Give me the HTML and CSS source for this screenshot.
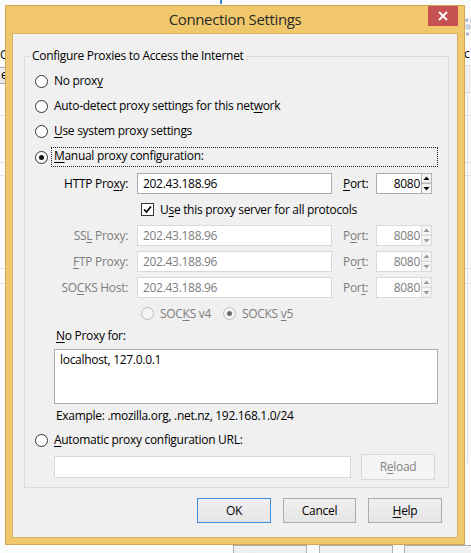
FILE: index.html
```html
<!DOCTYPE html>
<html lang="en">
<head>
    <meta charset="UTF-8">
    <title>Connection Settings</title>
    <link rel="stylesheet" href="styles.css">
</head>
<body>
    <!-- Options window that sits behind the dialog -->
    <div class="parent-window">
        <span class="parent-tick"></span>
        <span class="parent-text parent-g">G</span>
        <span class="parent-text parent-c">c</span>
        <span class="parent-btn parent-btn-left">er</span>
        <span class="parent-band"></span>
        <svg class="parent-gear" width="14" height="20" viewBox="0 0 14 20">
            <circle cx="10" cy="10" r="7" fill="none" stroke="#a9b8c8" stroke-width="3" stroke-dasharray="3 2"/>
            <circle cx="10" cy="10" r="3" fill="#c9d3de"/>
        </svg>
        <span class="parent-rule" style="top: 115px"></span>
        <span class="parent-rule" style="top: 162px"></span>
        <span class="parent-rule" style="top: 175px"></span>
        <span class="parent-rule" style="top: 268px"></span>
        <span class="parent-rule" style="top: 283px"></span>
        <span class="parent-vline"></span>
        <span class="parent-btn parent-btn-bottom" style="left: 233px"></span>
        <span class="parent-btn parent-btn-bottom" style="left: 319px"></span>
        <span class="parent-btn parent-btn-bottom" style="left: 404px"></span>
    </div>

    <div class="dialog">
        <div class="titlebar">
            <span class="title">Connection Settings</span>
            <button class="close-btn">
                <svg width="10" height="10" viewBox="0 0 10 10">
                    <path d="M1 1L9 9M9 1L1 9" stroke="#fff" stroke-width="2"/>
                </svg>
            </button>
        </div>

        <div class="client">
            <fieldset class="group">
                <legend>Configure Proxies to Access the Internet</legend>

                <div class="choice first">
                    <span class="radio"></span>
                    <span class="choice-label">No prox<u>y</u></span>
                </div>
                <div class="choice">
                    <span class="radio"></span>
                    <span class="choice-label">Auto-detect proxy settings for this net<u>w</u>ork</span>
                </div>
                <div class="choice">
                    <span class="radio"></span>
                    <span class="choice-label"><u>U</u>se system proxy settings</span>
                </div>
                <div class="choice manual">
                    <span class="radio checked"></span>
                    <span class="choice-label focused"><u>M</u>anual proxy configuration:</span>
                </div>

                <div class="proxy-grid">
                    <span class="field-label">HTTP Pro<u>x</u>y:</span>
                    <span class="textbox">202.43.188.96</span>
                    <span class="port-label"><u>P</u>ort:</span>
                    <span class="port">
                        <span class="textbox port-box">8080</span>
                        <svg class="spin" width="11" height="21" viewBox="0 0 11 21">
                            <rect x="0.5" y="0.5" width="10" height="9.5" fill="#f4f4f4" stroke="#b5b5b5"/>
                            <rect x="0.5" y="10.5" width="10" height="10" fill="#f4f4f4" stroke="#b5b5b5"/>
                            <path d="M2.5 7H8.5L5.5 3.5Z" fill="#000"/>
                            <path d="M2.5 14H8.5L5.5 17.5Z" fill="#000"/>
                        </svg>
                    </span>

                    <span class="share-row">
                        <span class="check">
                            <svg width="11" height="11" viewBox="0 0 11 11">
                                <path d="M2 5.5L4.5 8L9 2.5" fill="none" stroke="#000" stroke-width="1.7"/>
                            </svg>
                        </span>
                        <span>U<u>s</u>e this proxy server for all protocols</span>
                    </span>

                    <span class="field-label disabled">SS<u>L</u> Proxy:</span>
                    <span class="textbox disabled">202.43.188.96</span>
                    <span class="port-label disabled">P<u>o</u>rt:</span>
                    <span class="port">
                        <span class="textbox port-box disabled">8080</span>
                        <svg class="spin" width="11" height="21" viewBox="0 0 11 21">
                            <rect x="0.5" y="0.5" width="10" height="9.5" fill="#f4f4f4" stroke="#dadada"/>
                            <rect x="0.5" y="10.5" width="10" height="10" fill="#f4f4f4" stroke="#dadada"/>
                            <path d="M2.5 7H8.5L5.5 3.5Z" fill="#9a9a9a"/>
                            <path d="M2.5 14H8.5L5.5 17.5Z" fill="#9a9a9a"/>
                        </svg>
                    </span>

                    <span class="field-label disabled"><u>F</u>TP Proxy:</span>
                    <span class="textbox disabled">202.43.188.96</span>
                    <span class="port-label disabled">Po<u>r</u>t:</span>
                    <span class="port">
                        <span class="textbox port-box disabled">8080</span>
                        <svg class="spin" width="11" height="21" viewBox="0 0 11 21">
                            <rect x="0.5" y="0.5" width="10" height="9.5" fill="#f4f4f4" stroke="#dadada"/>
                            <rect x="0.5" y="10.5" width="10" height="10" fill="#f4f4f4" stroke="#dadada"/>
                            <path d="M2.5 7H8.5L5.5 3.5Z" fill="#9a9a9a"/>
                            <path d="M2.5 14H8.5L5.5 17.5Z" fill="#9a9a9a"/>
                        </svg>
                    </span>

                    <span class="field-label disabled">SO<u>C</u>KS Host:</span>
                    <span class="textbox disabled">202.43.188.96</span>
                    <span class="port-label disabled">Por<u>t</u>:</span>
                    <span class="port">
                        <span class="textbox port-box disabled">8080</span>
                        <svg class="spin" width="11" height="21" viewBox="0 0 11 21">
                            <rect x="0.5" y="0.5" width="10" height="9.5" fill="#f4f4f4" stroke="#dadada"/>
                            <rect x="0.5" y="10.5" width="10" height="10" fill="#f4f4f4" stroke="#dadada"/>
                            <path d="M2.5 7H8.5L5.5 3.5Z" fill="#9a9a9a"/>
                            <path d="M2.5 14H8.5L5.5 17.5Z" fill="#9a9a9a"/>
                        </svg>
                    </span>

                    <span class="socks-row disabled">
                        <span class="radio disabled"></span>
                        <span class="socks-label">SOC<u>K</u>S v4</span>
                        <span class="radio disabled checked"></span>
                        <span class="socks-label">SOCKS <u>v</u>5</span>
                    </span>
                </div>

                <div class="no-proxy-label"><u>N</u>o Proxy for:</div>
                <div class="textarea">localhost, 127.0.0.1</div>
                <div class="example">Example: .mozilla.org, .net.nz, 192.168.1.0/24</div>

                <div class="choice auto">
                    <span class="radio"></span>
                    <span class="choice-label"><u>A</u>utomatic proxy configuration URL:</span>
                </div>
                <div class="url-row">
                    <span class="textbox url-box disabled"></span>
                    <span class="button disabled">R<u>e</u>load</span>
                </div>
            </fieldset>

            <div class="actions">
                <span class="button default">OK</span>
                <span class="button">Cancel</span>
                <span class="button"><u>H</u>elp</span>
            </div>
        </div>
    </div>
</body>
</html>
```

FILE: styles.css
```css
* {
    margin: 0;
    padding: 0;
    box-sizing: border-box;
}

body {
    font-family: "Open Sans", "Noto Sans", sans-serif;
    font-size: 12px;
    line-height: 16px;
    letter-spacing: -0.3px;
    color: #000;
    background: #fbfbfb;
    width: 471px;
    height: 553px;
    overflow: hidden;
    position: relative;
}

u {
    text-decoration-thickness: 1px;
    text-underline-offset: 2px;
}

/* ---- parent window peeking out around the dialog ---- */

.parent-window {
    position: absolute;
    inset: 0;
}

.parent-window > * {
    position: absolute;
}

.parent-tick {
    left: 220px;
    top: 0;
    width: 2px;
    height: 4px;
    background: #3b83c4;
}

.parent-g {
    left: 0;
    top: 47px;
}

.parent-c {
    left: 464px;
    top: 46px;
}

.parent-gear {
    left: 458px;
    top: 17px;
}

.parent-btn {
    display: block;
    border: 1px solid #adadad;
    background: linear-gradient(#f2f2f2, #e6e6e6);
}

.parent-btn-left {
    left: -2px;
    top: 67px;
    width: 30px;
    height: 17px;
    padding-left: 2px;
    line-height: 14px;
}

.parent-btn-bottom {
    top: 545px;
    width: 74px;
    height: 22px;
}

.parent-band {
    left: 464px;
    top: 65px;
    width: 7px;
    height: 28px;
    background: #efefef;
    border-top: 1px solid #dcdcdc;
    border-bottom: 1px solid #dcdcdc;
}

.parent-rule {
    left: 0;
    width: 471px;
    height: 1px;
    background: #e2e2e2;
}

.parent-vline {
    left: 467px;
    top: 93px;
    width: 1px;
    height: 370px;
    background: #e2e2e2;
}

/* ---- dialog frame ---- */

.dialog {
    position: absolute;
    left: 5px;
    top: 5px;
    width: 460px;
    height: 540px;
    background: #f0c86b;
    border: 1px solid #cfa851;
    padding: 0 6px 6px;
    display: flex;
    flex-direction: column;
}

.titlebar {
    height: 27px;
    position: relative;
    display: flex;
    align-items: center;
    justify-content: center;
}

.title {
    font-size: 15px;
    letter-spacing: -0.35px;
    color: #2a2a2a;
    margin-top: -1px;
}

.close-btn {
    position: absolute;
    right: 0;
    top: 0;
    width: 30px;
    height: 20px;
    border: none;
    background: #c75050;
    display: flex;
    align-items: center;
    justify-content: center;
}

.client {
    flex: 1;
    background: #f0f0f0;
    border: 1px solid #d9b55f;
    padding: 0 15px 0 11px;
}

/* ---- proxy group ---- */

.group {
    margin-top: 14px;
    width: 420px;
    border: 1px solid #dcdcdc;
    padding: 0 10px 7px;
}

.group legend {
    margin-left: -5px;
    padding: 0 2px;
    line-height: 16px;
}

.choice {
    height: 20px;
    display: flex;
    align-items: center;
    margin-top: 5px;
}

.choice.first {
    margin-top: 7px;
}

.choice.manual {
    margin-top: 6px;
}

.choice-label {
    margin-left: 6px;
}

.choice-label.focused {
    flex: 1;
    margin-left: 3px;
    padding-left: 3px;
    height: 20px;
    line-height: 18px;
    outline: 1px dotted #222;
    outline-offset: -1px;
}

.radio {
    width: 13px;
    height: 13px;
    flex: none;
    border: 1px solid #333;
    border-radius: 50%;
    background: #fff;
    display: inline-flex;
    align-items: center;
    justify-content: center;
}

.radio.checked::after {
    content: "";
    width: 5px;
    height: 5px;
    border-radius: 50%;
    background: #111;
}

.radio.disabled {
    border-color: #bcbcbc;
    background: #f4f4f4;
}

.radio.disabled.checked::after {
    background: #6d6d6d;
}

.check {
    width: 13px;
    height: 13px;
    border: 1px solid #333;
    background: #fff;
    display: inline-flex;
    align-items: center;
    justify-content: center;
    margin-right: 6px;
}

/* ---- manual proxy fields ---- */

.proxy-grid {
    margin: 6px 0 0 19px;
    display: grid;
    grid-template-columns: 83px 195px 44px 56px;
    grid-auto-rows: 21px;
    row-gap: 5px;
    align-items: center;
}

.field-label {
    text-align: right;
    padding-right: 9px;
}

.port-label {
    padding-left: 11px;
}

.disabled {
    color: #7d7d7d;
}

.textbox {
    height: 21px;
    background: #fff;
    border: 1px solid #acacac;
    padding: 0 5px;
    line-height: 19px;
}

.textbox.disabled {
    border-color: #d9d9d9;
}

.port {
    display: flex;
}

.port-box {
    width: 45px;
    padding: 0 1px 0 0;
    text-align: right;
    border-right: none;
}

.share-row,
.socks-row {
    grid-column: 2 / 5;
    display: flex;
    align-items: center;
    padding-left: 4px;
}

.socks-label {
    margin: 0 12px 0 6px;
}

.no-proxy-label {
    margin: 4px 0 0 21px;
}

.textarea {
    margin: 5px 0 0 19px;
    width: 384px;
    height: 55px;
    background: #fff;
    border: 1px solid #acacac;
    padding: 2px 5px;
}

.example {
    margin: 4px 0 0 21px;
}

.choice.auto {
    margin-top: 6px;
}

.url-row {
    margin: 4px 0 0 19px;
    display: flex;
    align-items: center;
}

.url-box {
    width: 297px;
    height: 22px;
}

/* ---- buttons ---- */

.button {
    width: 74px;
    height: 25px;
    display: flex;
    align-items: center;
    justify-content: center;
    border: 1px solid #acacac;
    background: linear-gradient(#f0f0f0, #e5e5e5);
}

.button.default {
    border-color: #3c8ee0;
}

.button.disabled {
    margin-left: 10px;
    height: 26px;
    border-color: #d9d9d9;
    background: #f4f4f4;
    color: #838383;
}

.actions {
    margin-top: 10px;
    display: flex;
    justify-content: flex-end;
    gap: 12px;
}

.actions .button:nth-child(2) {
    width: 73px;
}
```
